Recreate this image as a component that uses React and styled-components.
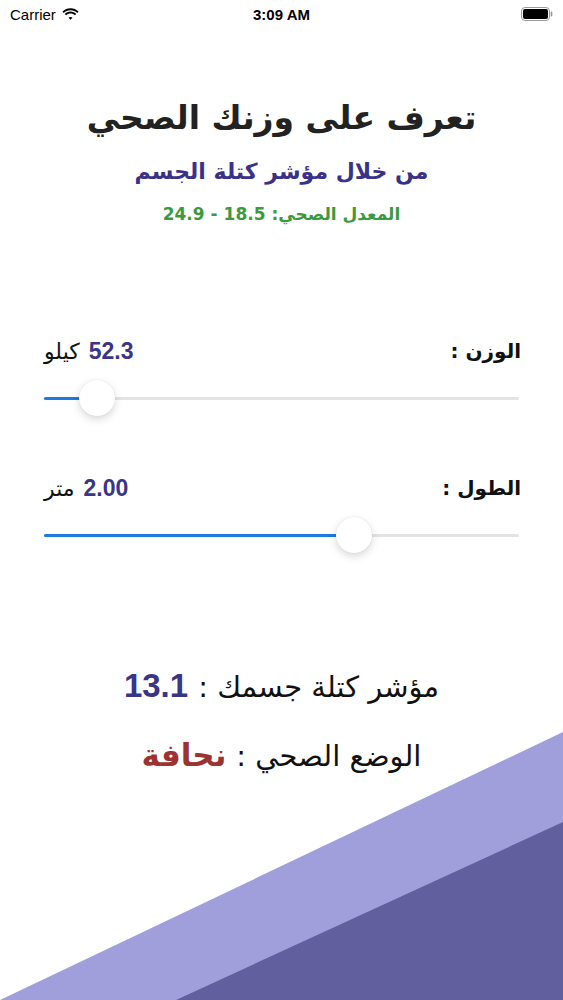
import React from "react";
import styled, { createGlobalStyle } from "styled-components";

const Global = createGlobalStyle`
  html, body { margin: 0; padding: 0; background: #fff; }
  body { font-family: "DejaVu Sans", "Liberation Sans", sans-serif; }
`;

const Screen = styled.div`
  position: relative;
  width: 563px;
  height: 1000px;
  overflow: hidden;
  background: #ffffff;
`;

const StatusBar = styled.div`
  height: 28px;
  display: grid;
  grid-template-columns: 1fr auto 1fr;
  align-items: center;
  padding: 0 10px;
  font-family: "Liberation Sans", Arial, sans-serif;
  font-size: 15px;
  color: #000;
`;

const StatusLeft = styled.div`
  display: flex;
  align-items: center;
  gap: 6px;
`;

const StatusTime = styled.div`
  font-weight: 700;
`;

const StatusRight = styled.div`
  display: flex;
  justify-content: flex-end;
  align-items: center;
`;

const Header = styled.div`
  direction: rtl;
  display: flex;
  flex-direction: column;
  align-items: center;
  padding-top: 68px;
`;

const Title = styled.h1`
  margin: 0;
  font-size: 33px;
  line-height: 44px;
  font-weight: 700;
  color: #222222;
`;

const Subtitle = styled.h2`
  margin: 16px 0 0;
  font-size: 22px;
  line-height: 32px;
  font-weight: 700;
  color: #3a3189;
`;

const Range = styled.div`
  margin-top: 14px;
  font-size: 17px;
  line-height: 24px;
  font-weight: 700;
  color: #3b9a3d;
`;

const Controls = styled.div`
  display: flex;
  flex-direction: column;
  gap: 57px;
  padding: 110px 44px 0 44px;
`;

const Control = styled.div`
  display: flex;
  flex-direction: column;
  gap: 14px;
`;

const LabelRow = styled.div`
  direction: rtl;
  display: flex;
  justify-content: space-between;
  align-items: center;
  height: 30px;
`;

const Label = styled.span`
  font-size: 20px;
  font-weight: 700;
  color: #111;
  margin-right: -2px;
`;

const ValueGroup = styled.span`
  display: flex;
  align-items: center;
  gap: 9px;
`;

const Value = styled.span`
  font-family: "Liberation Sans", Arial, sans-serif;
  font-size: 23px;
  font-weight: 700;
  color: #3b3587;
`;

const Unit = styled.span`
  font-size: 22px;
  color: #111;
`;

const SliderBox = styled.div`
  position: relative;
  height: 36px;
  display: flex;
  align-items: center;
`;

const Track = styled.div`
  width: 100%;
  height: 3px;
  border-radius: 2px;
  background: #e4e4e7;
  display: flex;
`;

const Fill = styled.div`
  height: 100%;
  border-radius: 2px;
  background: #1b7be0;
`;

const Thumb = styled.div`
  position: absolute;
  top: 0;
  width: 36px;
  height: 36px;
  margin-left: -18px;
  border-radius: 50%;
  background: #fff;
  box-shadow: 0 3px 8px rgba(0, 0, 0, 0.16), 0 0 1px rgba(0, 0, 0, 0.12);
`;

const Results = styled.div`
  direction: rtl;
  display: flex;
  flex-direction: column;
  align-items: center;
  gap: 28px;
  padding-top: 113px;
`;

const ResultLine = styled.div`
  display: flex;
  align-items: baseline;
  gap: 10px;
  font-size: 29px;
  line-height: 40px;
  color: #111;
`;

const BmiValue = styled.span`
  font-family: "Liberation Sans", Arial, sans-serif;
  font-size: 33px;
  font-weight: 700;
  color: #3b3587;
`;

const StatusValue = styled.span`
  font-size: 31px;
  font-weight: 700;
  color: #9b3333;
`;

const Decoration = styled.svg`
  position: absolute;
  left: 0;
  bottom: 0;
  width: 563px;
  height: 270px;
  display: block;
`;

function Slider({ value }) {
  return (
    <SliderBox>
      <Track>
        <Fill style={{ width: `${value * 100}%` }} />
      </Track>
      <Thumb style={{ left: `${value * 100}%` }} />
    </SliderBox>
  );
}

export default function App() {
  return (
    <>
      <Global />
      <Screen>
        <Decoration viewBox="0 0 563 270" preserveAspectRatio="none">
          <polygon points="0,270 563,2 563,270" fill="#a19fdb" />
          <polygon points="176,270 563,92 563,270" fill="#625f9f" />
        </Decoration>

        <StatusBar>
          <StatusLeft>
            <span>Carrier</span>
            <svg width="17" height="12" viewBox="0 0 17 12">
              <path d="M8.5 2.2c2.6 0 5 1 6.8 2.7l1.3-1.4C14.4 1.4 11.6.2 8.5.2S2.6 1.4.4 3.5l1.3 1.4C3.5 3.2 5.9 2.2 8.5 2.2z" fill="#000" />
              <path d="M8.5 5.6c1.7 0 3.2.6 4.4 1.7l1.3-1.4C12.7 4.5 10.7 3.6 8.5 3.6S4.3 4.5 2.8 5.9l1.3 1.4C5.3 6.2 6.8 5.6 8.5 5.6z" fill="#000" />
              <path d="M8.5 8.9c.8 0 1.5.3 2 .8L8.5 11.8 6.5 9.7c.5-.5 1.2-.8 2-.8z" fill="#000" />
            </svg>
          </StatusLeft>
          <StatusTime>3:09 AM</StatusTime>
          <StatusRight>
            <svg width="32" height="14" viewBox="0 0 32 14">
              <rect x="0.5" y="0.5" width="28" height="13" rx="3.5" fill="none" stroke="#999" />
              <rect x="2" y="2" width="25" height="10" rx="2" fill="#000" />
              <rect x="29.7" y="4.5" width="1.6" height="5" rx="0.8" fill="#999" />
            </svg>
          </StatusRight>
        </StatusBar>

        <Header>
          <Title>تعرف على وزنك الصحي</Title>
          <Subtitle>من خلال مؤشر كتلة الجسم</Subtitle>
          <Range>المعدل الصحي: 18.5 - 24.9</Range>
        </Header>

        <Controls>
          <Control>
            <LabelRow>
              <Label>الوزن :</Label>
              <ValueGroup>
                <Value>52.3</Value>
                <Unit>كيلو</Unit>
              </ValueGroup>
            </LabelRow>
            <Slider value={0.112} />
          </Control>
          <Control>
            <LabelRow>
              <Label>الطول :</Label>
              <ValueGroup>
                <Value>2.00</Value>
                <Unit>متر</Unit>
              </ValueGroup>
            </LabelRow>
            <Slider value={0.653} />
          </Control>
        </Controls>

        <Results>
          <ResultLine>
            <span>مؤشر كتلة جسمك :</span>
            <BmiValue>13.1</BmiValue>
          </ResultLine>
          <ResultLine>
            <span>الوضع الصحي :</span>
            <StatusValue>نحافة</StatusValue>
          </ResultLine>
        </Results>
      </Screen>
    </>
  );
}
